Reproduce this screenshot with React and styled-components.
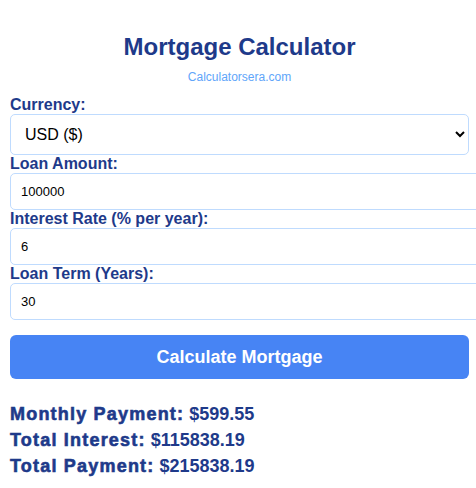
import styled, { createGlobalStyle } from 'styled-components'
import { useState } from 'react'

const GlobalStyle = createGlobalStyle`
  html, body {
    margin: 0;
    padding: 0;
    overflow: hidden;
    background: #ffffff;
    font-family: "Liberation Sans", Arial, sans-serif;
  }
`

const Page = styled.main`
  padding: 33px 7px 0 10px;
`

const Title = styled.h1`
  margin: 0;
  text-align: center;
  font-size: 24px;
  line-height: 28px;
  font-weight: 700;
  color: #1e3a8a;
`

const Site = styled.p`
  margin: 9px 0 12px;
  text-align: center;
  font-size: 12px;
  line-height: 14px;
  color: #60a5fa;
`

const Label = styled.label`
  display: block;
  font-size: 16px;
  line-height: 18px;
  font-weight: 700;
  color: #1e3a8a;
`

const Select = styled.select`
  display: block;
  width: 100%;
  height: 41px;
  margin: 0;
  padding: 0 10px;
  font-family: inherit;
  font-size: 16px;
  color: #000;
  background: #fff;
  border: 1px solid #bfdbfe;
  border-radius: 5px;
  outline: none;
`

const Input = styled.input`
  display: block;
  width: 100%;
  margin: 0;
  padding: 10px;
  font-family: inherit;
  font-size: 13px;
  line-height: 15px;
  color: #000;
  background: #fff;
  border: 1px solid #bfdbfe;
  border-radius: 5px;
  outline: none;
`

const Button = styled.button`
  display: block;
  width: 100%;
  height: 44px;
  margin: 15px 0 22px;
  border: none;
  border-radius: 6px;
  background: #4784f4;
  color: #fff;
  font-family: inherit;
  font-size: 18px;
  font-weight: 700;
  cursor: pointer;
`

const Result = styled.p`
  margin: 0;
  font-size: 18px;
  line-height: 26px;
  font-weight: 700;
  color: #1e3a8a;

  strong {
    letter-spacing: 1.2px;
    -webkit-text-stroke: 0.6px #1e3a8a;
  }
`

const fields = [
  { key: 'amount', label: 'Loan Amount:' },
  { key: 'rate', label: 'Interest Rate (% per year):' },
  { key: 'term', label: 'Loan Term (Years):' },
]

const App = () => {
  const [values, setValues] = useState({ amount: '100000', rate: '6', term: '30' })
  const [currency, setCurrency] = useState('USD')

  return (
    <>
      <GlobalStyle />
      <Page>
        <Title>Mortgage Calculator</Title>
        <Site>Calculatorsera.com</Site>

        <Label>Currency:</Label>
        <Select value={currency} onChange={e => setCurrency(e.target.value)}>
          <option value='USD'>USD ($)</option>
          <option value='EUR'>EUR (€)</option>
          <option value='GBP'>GBP (£)</option>
        </Select>

        {fields.map(f => (
          <div key={f.key}>
            <Label>{f.label}</Label>
            <Input
              type='number'
              value={values[f.key]}
              onChange={e => setValues({ ...values, [f.key]: e.target.value })}
            />
          </div>
        ))}

        <Button>Calculate Mortgage</Button>

        <Result><strong>Monthly Payment:</strong> $599.55</Result>
        <Result><strong>Total Interest:</strong> $115838.19</Result>
        <Result><strong>Total Payment:</strong> $215838.19</Result>
      </Page>
    </>
  )
}

export default App
